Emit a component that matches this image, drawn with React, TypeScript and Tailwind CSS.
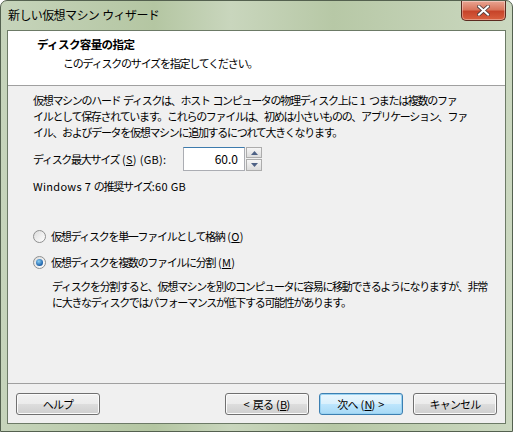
import React from 'react'

const jp = { fontFamily: '"Noto Sans CJK JP", "Noto Sans", sans-serif' }

// latin runs keep their normal spacing, CJK runs get squeezed like Meiryo UI
function T({ children }: { children: string }) {
  const parts = children.match(/[\x20-\x7e]+|[^\x20-\x7e]+/g) ?? []
  return (
    <>
      {parts.map((p, i) =>
        /^[\x20-\x7e]+$/.test(p) ? (
          <span key={i} className="tracking-[0.3px] whitespace-pre">
            {p}
          </span>
        ) : (
          <span key={i}>{p}</span>
        )
      )}
    </>
  )
}

function Btn({ label, focus }: { label: React.ReactNode; focus?: boolean }) {
  return (
    <div
      className={`w-[84px] h-[22px] rounded-[3px] border flex items-center justify-center text-[11px] tracking-[-0.8px] text-black ${
        focus
          ? 'border-[#3c7fb1] shadow-[inset_0_0_0_1px_#9ad3f2] bg-[linear-gradient(#eaf6fd_0%,#d9f0fc_50%,#bee6fd_50%,#a7d9f5_100%)]'
          : 'border-[#707070] shadow-[inset_0_0_0_1px_#fbfbfb] bg-[linear-gradient(#f2f2f2_0%,#ebebeb_50%,#dddddd_50%,#cfcfcf_100%)]'
      }`}
    >
      {label}
    </div>
  )
}

function Radio({ checked }: { checked?: boolean }) {
  return (
    <div className="w-[13px] h-[13px] rounded-full border border-[#8e8f8f] bg-[linear-gradient(135deg,#dcdcdc,#ffffff)] flex items-center justify-center shrink-0">
      {checked && (
        <div className="w-[7px] h-[7px] rounded-full bg-[radial-gradient(circle_at_40%_35%,#8ad0f5,#1b5fa8_70%,#0c3f78)]" />
      )}
    </div>
  )
}

export default function App() {
  return (
    <div className="w-[513px] h-[432px] overflow-hidden bg-white" style={jp}>
      <div className="w-[513px] h-[432px] flex flex-col rounded-t-[7px] border border-[#54614f] bg-[linear-gradient(90deg,#c6d4bb_0%,#b4c6a2_30%,#c9d6bd_45%,#b7c8a6_65%,#cbd8c0_100%)]">
        {/* title bar */}
        <div className="h-[29px] flex items-start shrink-0">
          <div className="pl-[7px] pt-[6px] text-[12px] tracking-[-0.6px] text-black leading-[16px]">
            <T>新しい仮想マシン ウィザード</T>
          </div>
          <div className="ml-auto mr-[6px] w-[45px] h-[20px] rounded-b-[5px] border border-t-0 border-[#5b2a1f] bg-[linear-gradient(#e9a592_0%,#d9765d_45%,#c7442a_55%,#d9603f_100%)] flex items-center justify-center shadow-[inset_0_0_0_1px_rgba(255,255,255,0.35)]">
            <svg width="13" height="11" viewBox="0 0 13 11">
              <path d="M2 1.5 L11 9.5 M11 1.5 L2 9.5" stroke="#4a3a3a" strokeWidth="3.6" strokeLinecap="square" />
              <path d="M2 1.5 L11 9.5 M11 1.5 L2 9.5" stroke="#ffffff" strokeWidth="2" strokeLinecap="square" />
            </svg>
          </div>
        </div>
        {/* client */}
        <div className="mx-[6px] mb-[7px] flex-1 flex flex-col border border-[#6c7a66] bg-[#f0f0f0]">
          <div className="h-[55px] bg-white border-b border-[#a0a0a0] shrink-0 flex flex-col">
            <div className="pl-[29px] pt-[5px] text-[11.5px] font-bold tracking-[-0.6px] leading-[16px] text-black">
              ディスク容量の指定
            </div>
            <div className="pl-[55px] pt-[3px] text-[11px] tracking-[-1.2px] leading-[16px] text-black">
              このディスクのサイズを指定してください。
            </div>
          </div>
          <div className="flex-1 flex flex-col pl-[25px] pt-[6px] text-[11px] tracking-[-1.3px] leading-[16px] text-black">
            <div className="whitespace-nowrap">
              <T>仮想マシンのハード ディスクは、ホスト コンピュータの物理ディスク上に 1 つまたは複数のファ</T>
            </div>
            <div className="whitespace-nowrap">イルとして保存されています。これらのファイルは、初めは小さいものの、アプリケーション、ファ</div>
            <div className="whitespace-nowrap">イル、およびデータを仮想マシンに追加するにつれて大きくなります。</div>
            <div className="flex items-center mt-[7px] h-[24px]">
              <div className="w-[150px] whitespace-nowrap">
                <T>ディスク最大サイズ (</T>
                <span className="underline tracking-[0.3px]">S</span>
                <T>) (GB):</T>
              </div>
              <div className="w-[62px] h-[24px] border border-[#abadb3] border-t-[#3d7bad] bg-white flex items-center justify-end pr-[6px] text-[12px] tracking-[0px]">
                60.0
              </div>
              <div className="flex flex-col ml-[1px] h-[24px] gap-[1px]">
                <div className="w-[16px] h-[11px] border border-[#acacac] bg-[linear-gradient(#f6f6f6,#dcdcdc)] flex items-center justify-center">
                  <svg width="7" height="4" viewBox="0 0 7 4"><path d="M0 4 L3.5 0 L7 4 Z" fill="#4d6185" /></svg>
                </div>
                <div className="w-[16px] h-[12px] border border-[#acacac] bg-[linear-gradient(#f6f6f6,#dcdcdc)] flex items-center justify-center">
                  <svg width="7" height="4" viewBox="0 0 7 4"><path d="M0 0 L7 0 L3.5 4 Z" fill="#4d6185" /></svg>
                </div>
              </div>
            </div>
            <div className="mt-[7px] whitespace-nowrap">
              <T>Windows 7 の推奨サイズ:60 GB</T>
            </div>
            <div className="flex items-center gap-[5px] mt-[34px]">
              <Radio />
              <span className="whitespace-nowrap">
                <T>仮想ディスクを単一ファイルとして格納 (</T>
                <span className="underline tracking-[0.3px]">O</span>
                <T>)</T>
              </span>
            </div>
            <div className="flex items-center gap-[5px] mt-[10px]">
              <Radio checked />
              <span className="whitespace-nowrap">
                <T>仮想ディスクを複数のファイルに分割 (</T>
                <span className="underline tracking-[0.3px]">M</span>
                <T>)</T>
              </span>
            </div>
            <div className="pl-[19px] mt-[8px]">
              <div className="whitespace-nowrap">ディスクを分割すると、仮想マシンを別のコンピュータに容易に移動できるようになりますが、非常</div>
              <div className="whitespace-nowrap">に大きなディスクではパフォーマンスが低下する可能性があります。</div>
            </div>
          </div>
          <div className="h-[40px] border-t border-[#a0a0a0] shrink-0 flex items-start pt-[9px] px-[8px]">
            <Btn label="ヘルプ" />
            <div className="ml-auto flex gap-[10px]">
              <Btn
                label={
                  <span>
                    <T>{'< 戻る ('}</T>
                    <span className="underline">B</span>
                    <T>)</T>
                  </span>
                }
              />
              <Btn
                focus
                label={
                  <span>
                    <T>次へ (</T>
                    <span className="underline">N</span>
                    <T>{') >'}</T>
                  </span>
                }
              />
              <Btn label="キャンセル" />
            </div>
          </div>
        </div>
      </div>
    </div>
  )
}
